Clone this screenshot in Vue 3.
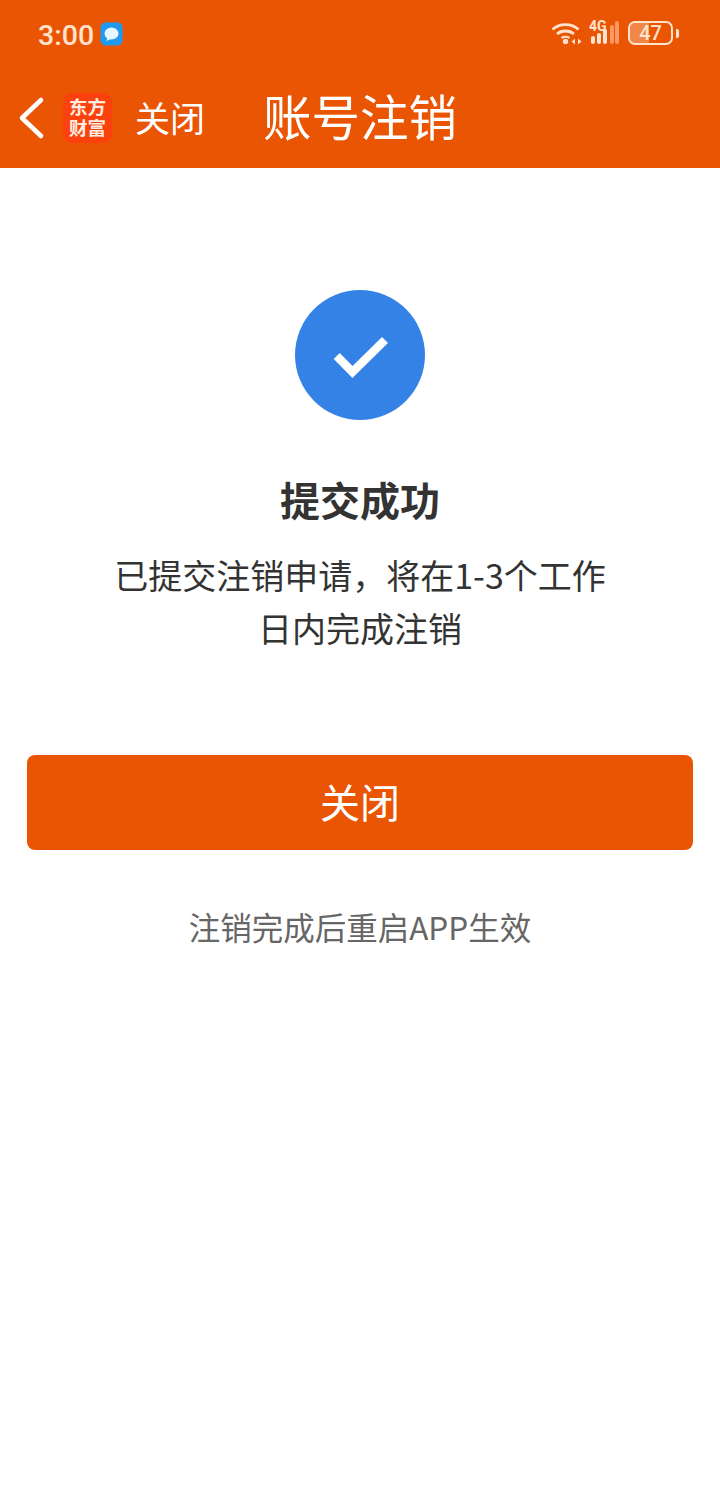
<template>
  <div class="page">
    <header class="top">
      <div class="status">
        <div class="status-left">
          <span class="time">3:00</span>
          <svg class="msg" width="23" height="24" viewBox="0 0 23 24">
            <rect x="0.500" y="0.500" width="22" height="23" rx="5" fill="#1e9bf0" />
            <ellipse cx="11.500" cy="11.500" rx="7" ry="6" fill="#e8f6ff" />
            <path d="M7.500 15l-1 4 5-2.500z" fill="#e8f6ff" />
          </svg>
        </div>
        <div class="status-right">
          <svg width="32" height="24" viewBox="0 0 32 24" fill="none" stroke="#ffe3cc" stroke-width="2.800">
            <path d="M1.500 8.500c7-6.500 19-6.500 26 0" />
            <path d="M6 13c4.500-4 12.500-4 17 0" />
            <path d="M10.500 17c2-1.600 6-1.600 8 0" stroke-width="2" />
            <circle cx="14.500" cy="20.500" r="2.700" fill="#ffe3cc" stroke="none" />
            <path d="M20.500 20.500l3.500-3v6zM30.500 20.500l-3.500-3v6z" fill="#ffe3cc" stroke="none" />
          </svg>
          <div class="signal">
            <span class="net">4G</span>
            <svg width="34" height="24" viewBox="0 0 34 24">
              <rect x="4" y="15" width="4" height="8" rx="2" fill="#ffe3cc" />
              <rect x="10" y="12" width="4" height="11" rx="2" fill="#ffe3cc" />
              <rect x="16" y="8" width="4" height="15" rx="2" fill="#ffe3cc" />
              <rect x="23" y="4" width="4" height="19" rx="2" fill="#f79a66" />
              <rect x="28" y="0" width="4" height="23" rx="2" fill="#f79a66" />
            </svg>
          </div>
          <div class="battery">
            <div class="battery-body">
              <span class="battery-fill" :style="{ width: battery + '%' }"></span>
              <span class="battery-num">{{ battery }}</span>
            </div>
            <span class="battery-tip"></span>
          </div>
        </div>
      </div>

      <div class="nav">
        <svg class="back" width="28" height="44" viewBox="0 0 28 44" fill="none" stroke="#fff" stroke-width="4.600" stroke-linecap="round" stroke-linejoin="round">
          <path d="M23 4 L4 22 L23 40" />
        </svg>
        <div class="logo">
          <span>东方</span>
          <span>财富</span>
        </div>
        <span class="close-link">关闭</span>
        <h1 class="title">账号注销</h1>
      </div>
    </header>

    <main class="content">
      <div class="ok-icon">
        <svg width="70" height="60" viewBox="0 0 70 60" fill="none" stroke="#fff" stroke-width="8.500">
          <path d="M11.700 31 L27.500 47 L60 15" />
        </svg>
      </div>
      <h2 class="result">提交成功</h2>
      <p class="desc">已提交注销申请，将在1-3个工作<br />日内完成注销</p>
      <button class="close-btn" type="button">关闭</button>
      <p class="hint">注销完成后重启APP生效</p>
    </main>
  </div>
</template>

<script setup>
const battery = 47
</script>

<style>
body {
  background: #fff;
}
</style>

<style scoped>
.page {
  width: 720px;
  height: 1496px;
  overflow: hidden;
  background: #fff;
  font-family: "Noto Sans CJK SC", "Noto Sans", sans-serif;
}
.top {
  height: 168px;
  background: #ea5504;
  color: #fff;
}
.status {
  height: 68px;
  display: flex;
  justify-content: space-between;
  align-items: center;
  padding: 0 41px 0 38px;
}
.status-left {
  display: flex;
  align-items: center;
  gap: 6px;
}
.time {
  font-family: Roboto, sans-serif;
  font-size: 28.500px;
  font-weight: 500;
  color: #ffe3cc;
  margin-top: 2px;
}
.status-right {
  display: flex;
  align-items: center;
  gap: 4px;
  margin-top: -2px;
}
.signal {
  position: relative;
  width: 34px;
  height: 24px;
}
.signal svg {
  display: block;
}
.net {
  position: absolute;
  left: 2px;
  top: -3px;
  font-family: Roboto, sans-serif;
  font-size: 14px;
  line-height: 16px;
  font-weight: 700;
  color: #ffe3cc;
}
.battery {
  display: flex;
  align-items: center;
  margin-left: 3px;
}
.battery-body {
  position: relative;
  width: 45px;
  height: 24px;
  border: 2px solid #ffe3cc;
  border-radius: 7px;
  box-sizing: border-box;
  overflow: hidden;
}
.battery-fill {
  position: absolute;
  left: 0;
  top: 0;
  bottom: 0;
  background: rgba(255, 227, 204, 0.35);
}
.battery-num {
  position: absolute;
  inset: 0;
  text-align: center;
  font-family: Roboto, sans-serif;
  font-size: 20px;
  font-weight: 500;
  line-height: 20px;
  color: #ffe3cc;
}
.battery-tip {
  width: 3px;
  height: 9px;
  margin-left: 3px;
  background: #ffe3cc;
  border-radius: 0 2px 2px 0;
}
.nav {
  height: 100px;
  display: flex;
  align-items: center;
  padding-left: 18px;
}
.back {
  flex: none;
}
.logo {
  width: 49px;
  height: 50px;
  margin-left: 17px;
  padding-bottom: 3px;
  box-sizing: border-box;
  border-radius: 9px;
  background: #fb420e;
  display: flex;
  flex-direction: column;
  align-items: center;
  justify-content: center;
  font-size: 18.500px;
  font-weight: 700;
  line-height: 21px;
  color: #ffeee0;
}
.close-link {
  margin: 0 0 4px 23px;
  font-size: 35px;
  font-weight: 400;
}
.title {
  margin: 0 0 6px 58px;
  font-size: 48.500px;
  font-weight: 400;
  line-height: 60px;
}
.content {
  display: flex;
  flex-direction: column;
  align-items: center;
  padding-top: 122px;
}
.ok-icon {
  width: 130px;
  height: 130px;
  border-radius: 50%;
  background: #3482e6;
  display: flex;
  align-items: center;
  justify-content: center;
}
.result {
  margin: 50px 0 0;
  font-size: 40px;
  line-height: 58px;
  font-weight: 700;
  color: #333;
}
.desc {
  margin: 20px 0 0;
  font-size: 34px;
  line-height: 53px;
  text-align: center;
  color: #333;
  font-weight: 400;
}
.close-btn {
  width: 666px;
  height: 95px;
  margin-top: 101px;
  padding: 0 0 4px;
  border: none;
  border-radius: 8px;
  background: #ea5504;
  color: #fff;
  font-family: inherit;
  font-size: 40px;
}
.hint {
  margin: 51px 0 0;
  font-size: 31.500px;
  line-height: 50px;
  color: #666;
}
</style>
